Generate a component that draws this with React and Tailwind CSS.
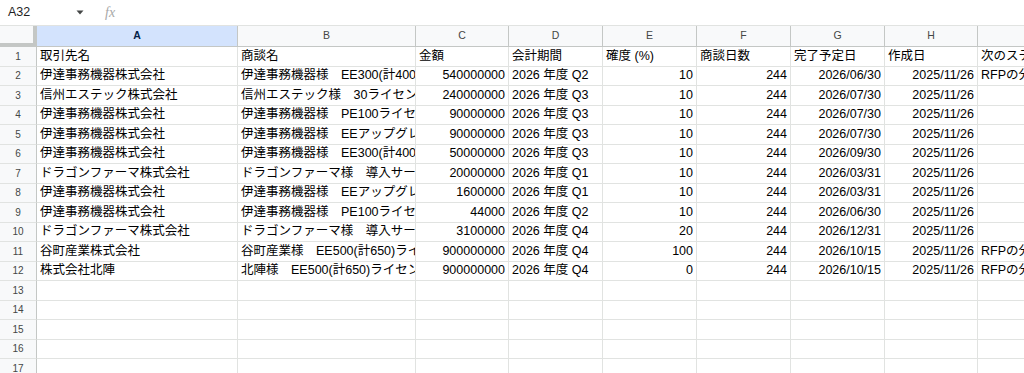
import React from "react";

const COLS = [
  { key: "A", w: "w-[201px]" },
  { key: "B", w: "w-[178px]" },
  { key: "C", w: "w-[93px]" },
  { key: "D", w: "w-[94px]" },
  { key: "E", w: "w-[94px]" },
  { key: "F", w: "w-[94px]" },
  { key: "G", w: "w-[94px]" },
  { key: "H", w: "w-[93px]" },
  { key: "I", w: "w-[140px]" },
];

const RIGHT = [false, false, true, false, true, true, true, true, false];

const ROWS = [
  ["取引先名", "商談名", "金額", "会計期間", "確度 (%)", "商談日数", "完了予定日", "作成日", "次のステップ"],
  ["伊達事務機器株式会社", "伊達事務機器様　EE300(計400ライセンス)", "540000000", "2026 年度 Q2", "10", "244", "2026/06/30", "2025/11/26", "RFPの分析"],
  ["信州エステック株式会社", "信州エステック様　30ライセンス", "240000000", "2026 年度 Q3", "10", "244", "2026/07/30", "2025/11/26", ""],
  ["伊達事務機器株式会社", "伊達事務機器様　PE100ライセンス", "90000000", "2026 年度 Q3", "10", "244", "2026/07/30", "2025/11/26", ""],
  ["伊達事務機器株式会社", "伊達事務機器様　EEアップグレード", "90000000", "2026 年度 Q3", "10", "244", "2026/07/30", "2025/11/26", ""],
  ["伊達事務機器株式会社", "伊達事務機器様　EE300(計400ライセンス)", "50000000", "2026 年度 Q3", "10", "244", "2026/09/30", "2025/11/26", ""],
  ["ドラゴンファーマ株式会社", "ドラゴンファーマ様　導入サービス", "20000000", "2026 年度 Q1", "10", "244", "2026/03/31", "2025/11/26", ""],
  ["伊達事務機器株式会社", "伊達事務機器様　EEアップグレード", "1600000", "2026 年度 Q1", "10", "244", "2026/03/31", "2025/11/26", ""],
  ["伊達事務機器株式会社", "伊達事務機器様　PE100ライセンス", "44000", "2026 年度 Q2", "10", "244", "2026/06/30", "2025/11/26", ""],
  ["ドラゴンファーマ株式会社", "ドラゴンファーマ様　導入サービス", "3100000", "2026 年度 Q4", "20", "244", "2026/12/31", "2025/11/26", ""],
  ["谷町産業株式会社", "谷町産業様　EE500(計650)ライセンス", "900000000", "2026 年度 Q4", "100", "244", "2026/10/15", "2025/11/26", "RFPの分析"],
  ["株式会社北陣", "北陣様　EE500(計650)ライセンス", "900000000", "2026 年度 Q4", "0", "244", "2026/10/15", "2025/11/26", "RFPの分析"],
];

const FONT = { fontFamily: '"Liberation Sans", Arial, "Noto Sans CJK JP", sans-serif' };

function Row({ n, cells }) {
  return (
    <div className="flex h-[19.5px] shrink-0">
      <div className="w-[37px] shrink-0 bg-[#f8f9fa] border-r border-r-[#c4c7c5] border-b border-b-[#e1e3e1] flex items-center justify-center text-[10px] text-[#444746]">
        {n}
      </div>
      {COLS.map((c, i) => {
        const v = cells ? cells[i] : "";
        const right = n !== 1 && RIGHT[i];
        return (
          <div
            key={c.key}
            className={`${c.w} shrink-0 border-r border-b border-[#e1e3e1] flex items-center overflow-hidden whitespace-nowrap px-[3px] text-[12.5px] text-black ${right ? "justify-end" : "justify-start"}`}
          >
            {v}
          </div>
        );
      })}
    </div>
  );
}

export default function App() {
  const empty = [13, 14, 15, 16, 17, 18];
  return (
    <div className="w-[1024px] h-[373px] overflow-hidden bg-white flex flex-col" style={FONT}>
      <div className="h-[26px] shrink-0 flex items-center border-b border-[#e1e3e1]">
        <div className="w-[68px] pl-[8px] text-[12.5px] text-[#1f1f1f]">A32</div>
        <svg width="8" height="5" viewBox="0 0 8 5" className="ml-[8px]">
          <path d="M0.5 0.5 L7.5 0.5 L4 4.5 Z" fill="#444746" />
        </svg>
        <div
          className="ml-[21px] text-[14px] italic text-[#a8a8a8]"
          style={{ fontFamily: '"Liberation Serif", "Times New Roman", serif' }}
        >
          fx
        </div>
      </div>
      <div className="flex h-[21px] shrink-0">
        <div className="w-[37px] shrink-0 bg-[#f8f9fa] border-r-[4px] border-b-[4px] border-[#c4c7c5]" />
        {COLS.map((c) => (
          <div
            key={c.key}
            className={`${c.w} shrink-0 border-r border-b border-[#c4c7c5] flex items-center justify-center text-[10.5px] ${
              c.key === "A" ? "bg-[#d3e3fd] font-bold text-[#041e49]" : "bg-[#f8f9fa] text-[#444746]"
            }`}
          >
            {c.key}
          </div>
        ))}
      </div>
      {ROWS.map((r, i) => (
        <Row key={i} n={i + 1} cells={r} />
      ))}
      {empty.map((n) => (
        <Row key={n} n={n} />
      ))}
    </div>
  );
}
